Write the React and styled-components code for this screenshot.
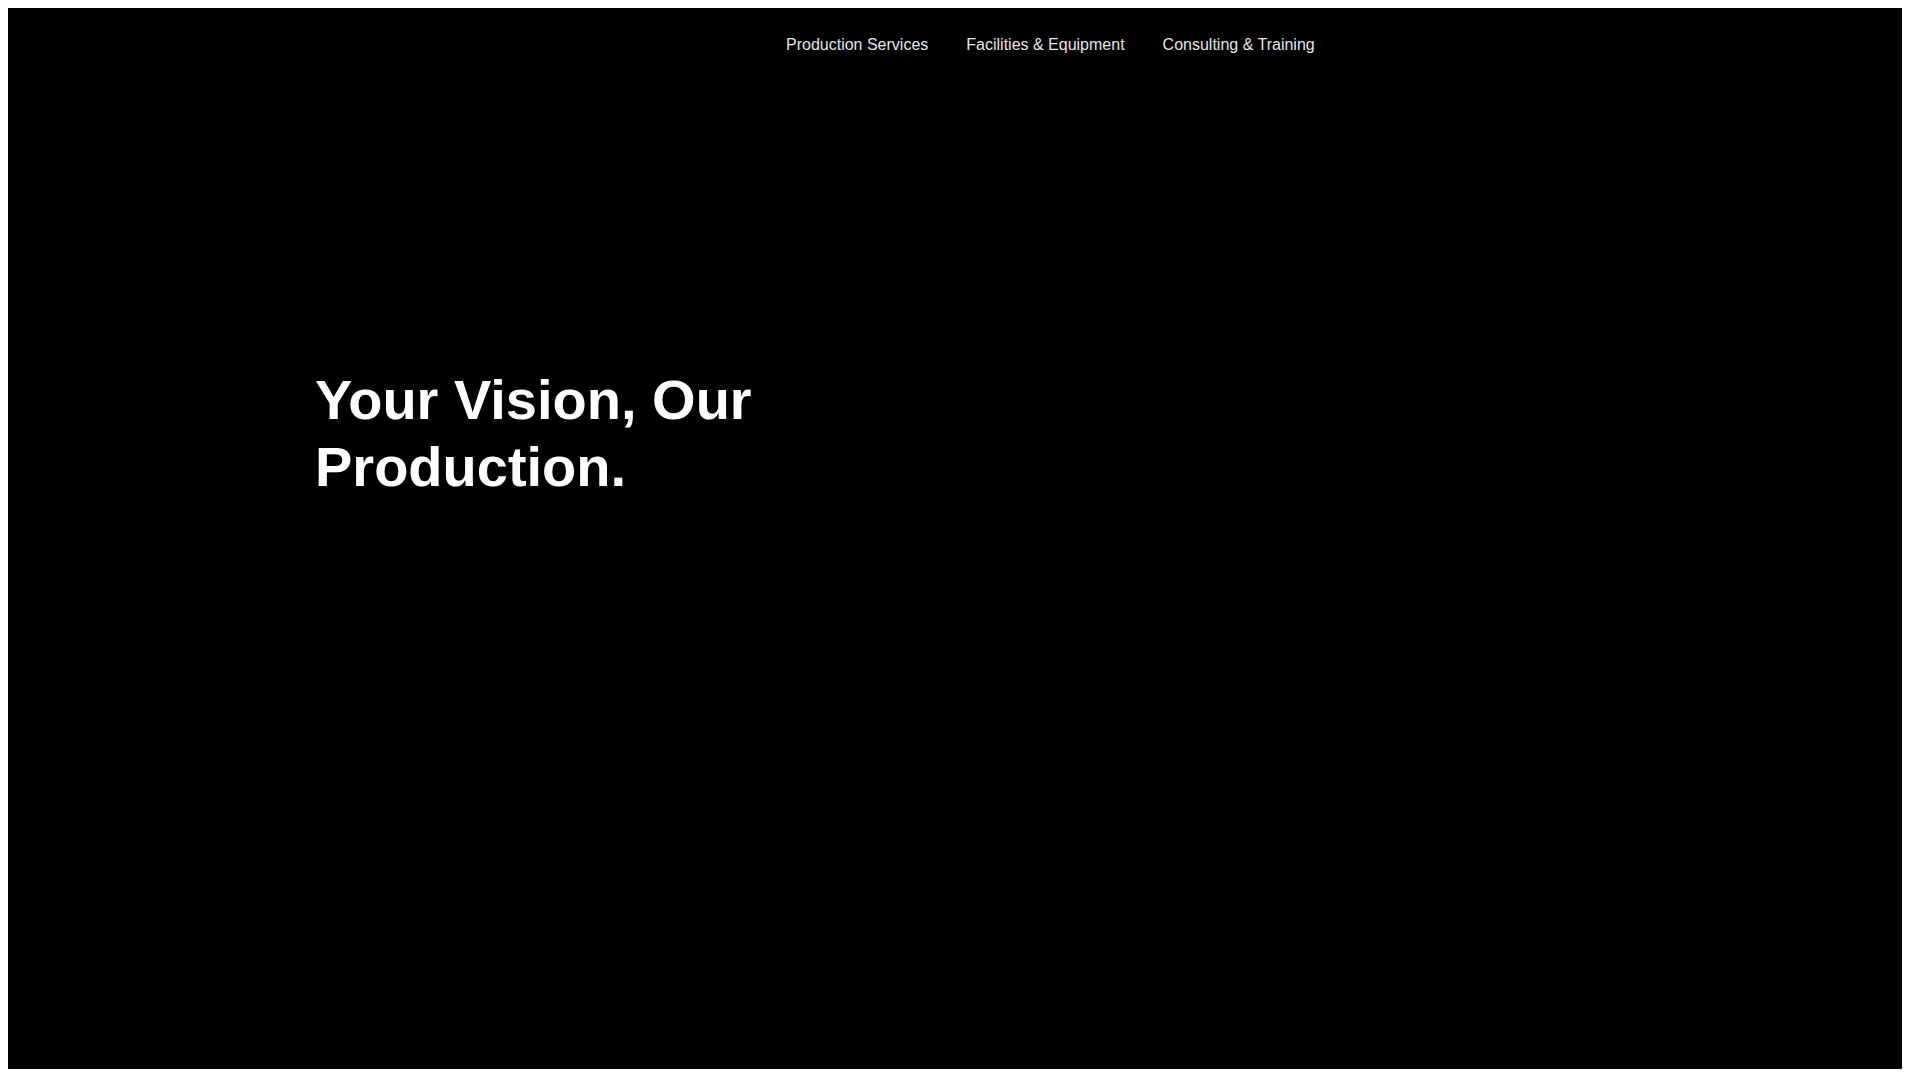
import React from 'react'
import styled, { createGlobalStyle } from 'styled-components'

const GlobalStyle = createGlobalStyle`
  body {
    margin: 8px;
    background: #ffffff;
    font-family: "Liberation Sans", Arial, sans-serif;
  }
  * { box-sizing: border-box; }
`

const links = ['Production Services', 'Facilities & Equipment', 'Consulting & Training']

export default function App() {
  return (
    <>
      <GlobalStyle />
      <Page>
        <Header>
          <HeaderInner>
            <Brand href="#" aria-label="Home" />
            <Nav>
              {links.map((l) => (
                <NavLink key={l} href="#">{l}</NavLink>
              ))}
            </Nav>
          </HeaderInner>
        </Header>
        <Hero>
          <Container>
            <Title>Your Vision, Our Production.</Title>
          </Container>
        </Hero>
      </Page>
    </>
  )
}

const Page = styled.div`
  width: calc(100vw - 26px);
  min-height: calc(100vh - 19px);
  background: #000000;
  color: #ffffff;
`

const Header = styled.header`
  height: 74px;
  display: flex;
  align-items: center;
`

const HeaderInner = styled.div`
  width: 100%;
  max-width: 1280px;
  margin: 0 auto;
  display: flex;
  align-items: center;
`

const Brand = styled.a`
  flex: 0 0 471px;
  height: 40px;
`

const Nav = styled.nav`
  display: flex;
  align-items: center;
  gap: 38px;
`

const NavLink = styled.a`
  font-size: 16px;
  color: #e6e6e6;
  text-decoration: none;
  white-space: nowrap;
`

const Hero = styled.section`
  padding-top: 284px;
  padding-bottom: 200px;
`

const Container = styled.div`
  max-width: 1280px;
  margin: 0 auto;
`

const Title = styled.h1`
  margin: 0;
  max-width: 640px;
  font-size: 56px;
  line-height: 1.2;
  font-weight: 700;
  color: #ffffff;
`
